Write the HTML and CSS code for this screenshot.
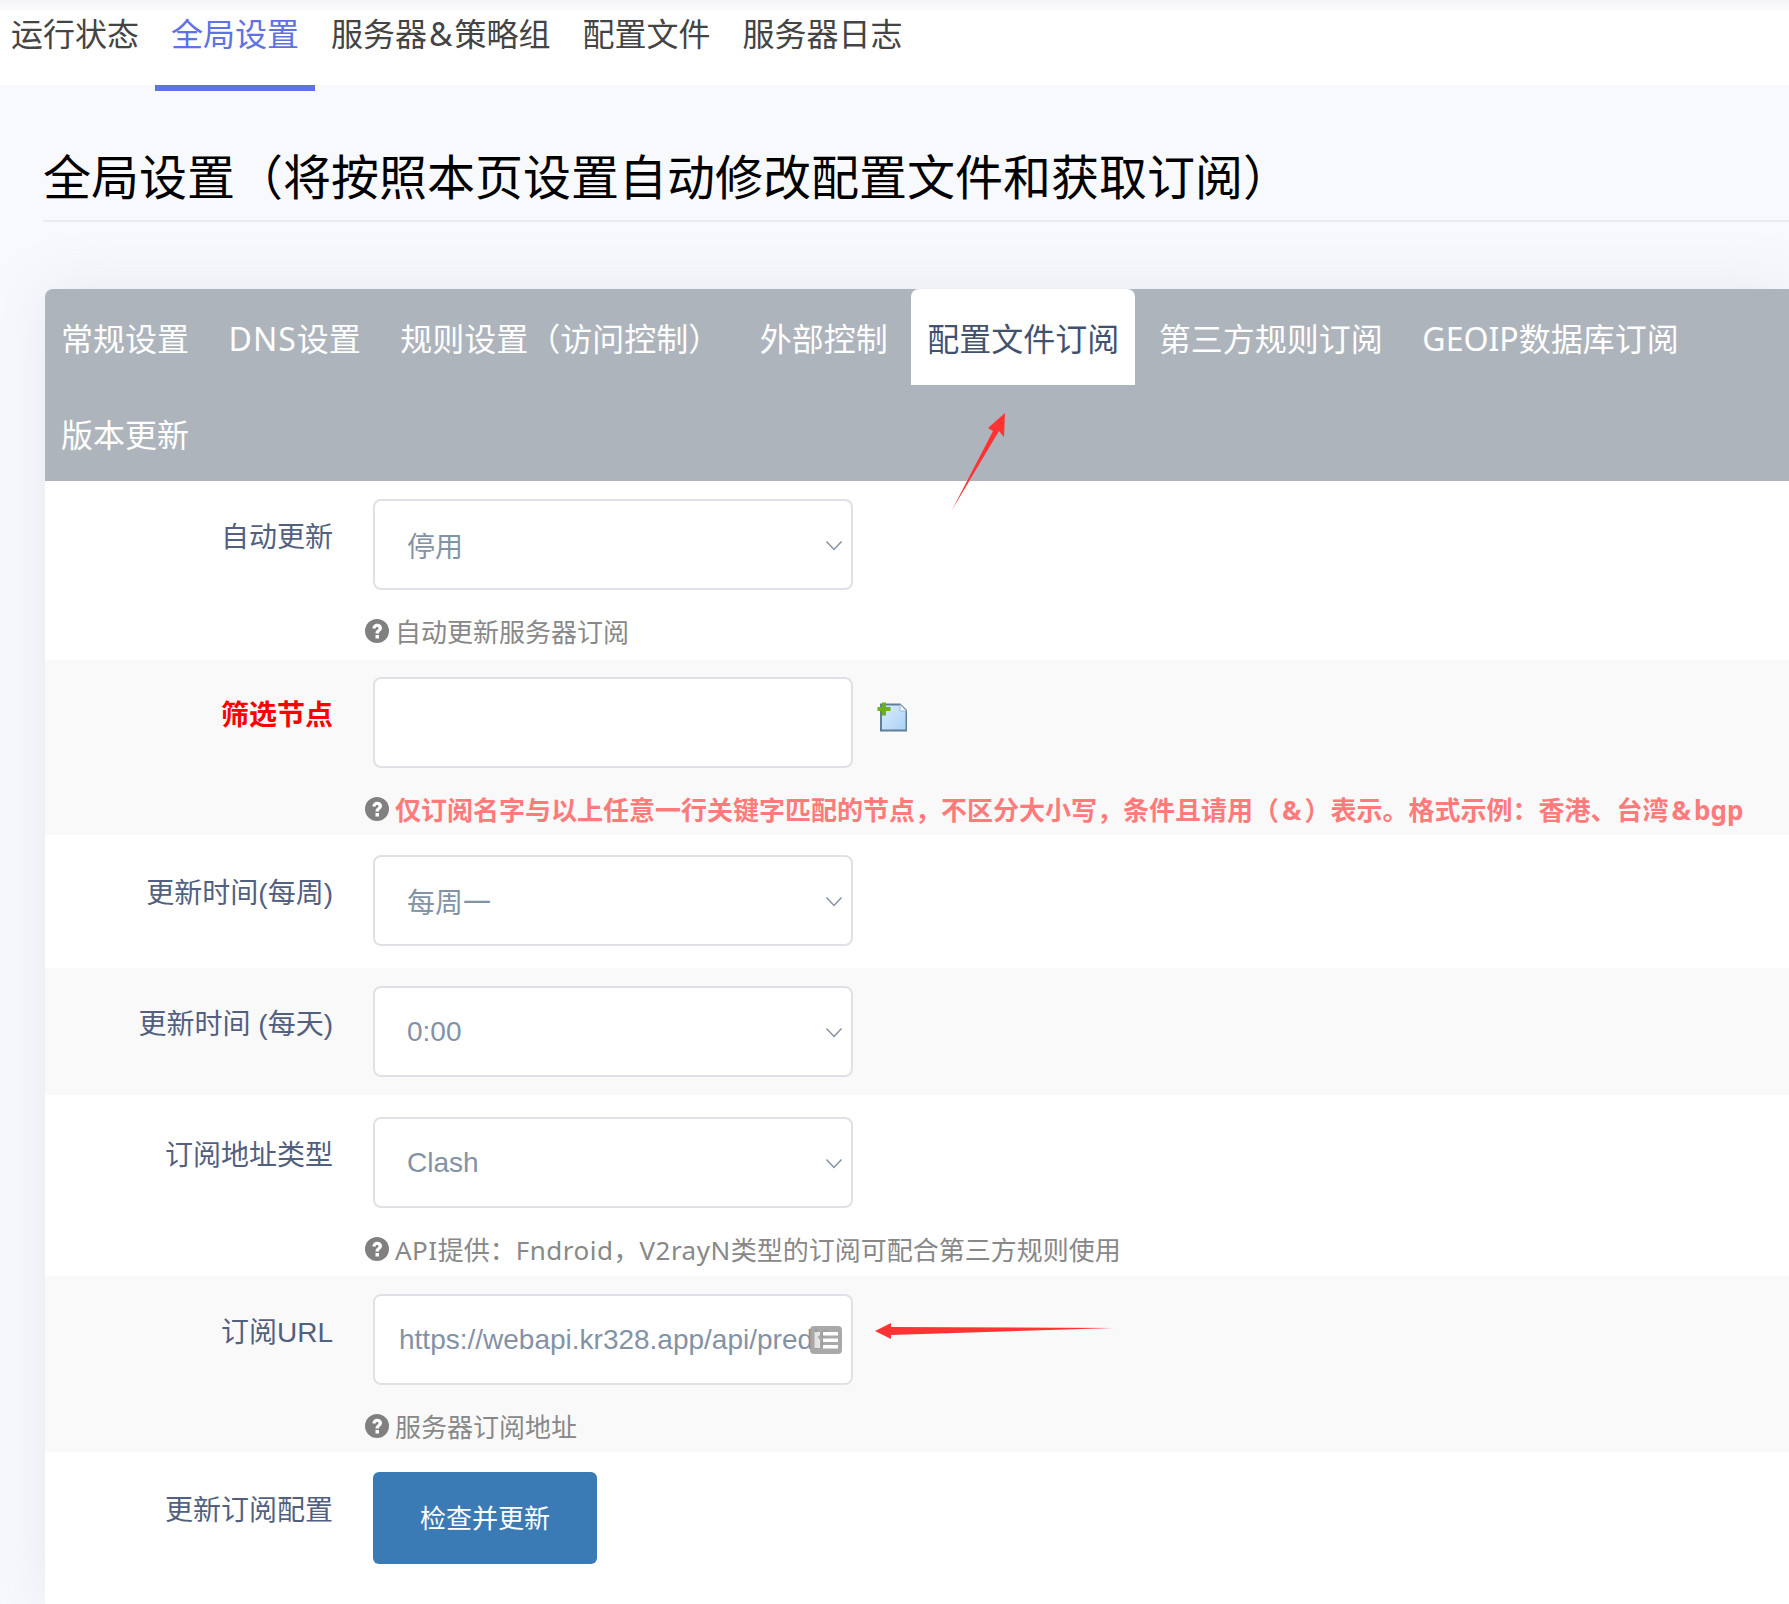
FILE: index.html
```html
<!DOCTYPE html>
<html lang="zh-CN">
<head>
<meta charset="utf-8">
<title>全局设置</title>
<link rel="stylesheet" href="styles.css">
</head>
<body>
<svg class="defs" width="0" height="0" aria-hidden="true">
  <defs>
    <linearGradient id="docfill" x1="0" y1="0" x2="1" y2="1"><stop offset="0" stop-color="#dcedfd"/><stop offset="1" stop-color="#a9d1f6"/></linearGradient>
    <symbol id="q" viewBox="0 0 24 24"><circle cx="12" cy="12" r="12" fill="#808080"/><path d="M7.500 9.500 C7.500 6.500 9.700 4.800 12.300 4.800 C15 4.800 17 6.500 17 9 C17 12 14 12 14 14.500 L10.500 14.500 C10.500 10.800 13.500 10.800 13.500 9.200 C13.500 8.400 12.900 7.900 12.100 7.900 C11.200 7.900 10.700 8.500 10.700 9.500 Z M10.500 16 H14 V19.500 H10.500 Z" fill="#fff"/></symbol>
    <symbol id="chev" viewBox="0 0 18 12"><path d="M1.500 1.500 L9 9.500 L16.500 1.500" fill="none" stroke="#8492a6" stroke-width="1.500"/></symbol>
  </defs>
</svg>
<nav class="topnav">
  <a class="topnav-item">运行状态</a>
  <a class="topnav-item is-active">全局设置</a>
  <a class="topnav-item">服务器<span class="amp">&amp;</span>策略组</a>
  <a class="topnav-item">配置文件</a>
  <a class="topnav-item">服务器日志</a>
</nav>
<main class="page">
  <h1 class="page-title">全局设置（将按照本页设置自动修改配置文件和获取订阅）</h1>
  <section class="card">
    <div class="tabs">
      <a class="tab">常规设置</a>
      <a class="tab"><span class="latin-wide">DNS</span>设置</a>
      <a class="tab">规则设置（访问控制）</a>
      <a class="tab">外部控制</a>
      <a class="tab is-active">配置文件订阅</a>
      <a class="tab">第三方规则订阅</a>
      <a class="tab">GEOIP数据库订阅</a>
      <a class="tab">版本更新</a>
      <svg class="arrow-up" width="60" height="100" viewBox="0 0 60 100"><path d="M1 97 L42 18 L37 15 L54 0 L53 24 L48 18 Z" fill="#ff3333"/></svg>
    </div>
    <div class="form">
      <div class="row">
        <label class="row-label">自动更新</label>
        <div class="row-field">
          <div class="control-line"><div class="control select">停用<svg class="chev" width="18" height="12"><use href="#chev"/></svg></div></div>
          <p class="help"><svg class="help-icon" width="24" height="24"><use href="#q"/></svg>自动更新服务器订阅</p>
        </div>
      </div>
      <div class="row row-alt">
        <label class="row-label label-danger">筛选节点</label>
        <div class="row-field">
          <div class="control-line"><div class="control"></div>
            <svg class="add-icon" width="30" height="30" viewBox="0 0 30 30"><path d="M4 2.500 H23 L29.500 9 V28.500 H4 Z" fill="url(#docfill)" stroke="#5f7f97" stroke-width="2"/><path d="M23 2.500 V9 H29.500" fill="#f2f8fe" stroke="#9fb6c8" stroke-width="1"/><path d="M5 .500 H9 V5 H13.500 V9 H9 V13.500 H5 V9 H.500 V5 H5 Z" fill="#6cb020"/></svg>
          </div>
          <p class="help help-danger"><svg class="help-icon" width="24" height="24"><use href="#q"/></svg><span>仅订阅名字与以上任意一行关键字匹配的节点，不区分大小写，条件且请用（<span class="amp-sm">&amp;</span>）表示。格式示例：香港、台湾<span class="amp-sm">&amp;</span>bgp</span></p>
        </div>
      </div>
      <div class="row">
        <label class="row-label">更新时间(每周)</label>
        <div class="row-field">
          <div class="control-line"><div class="control select">每周一<svg class="chev" width="18" height="12"><use href="#chev"/></svg></div></div>
        </div>
      </div>
      <div class="row row-alt">
        <label class="row-label">更新时间 (每天)</label>
        <div class="row-field">
          <div class="control-line"><div class="control select select-latin">0:00<svg class="chev" width="18" height="12"><use href="#chev"/></svg></div></div>
        </div>
      </div>
      <div class="row">
        <label class="row-label">订阅地址类型</label>
        <div class="row-field">
          <div class="control-line"><div class="control select select-latin">Clash<svg class="chev" width="18" height="12"><use href="#chev"/></svg></div></div>
          <p class="help"><svg class="help-icon" width="24" height="24"><use href="#q"/></svg><span><span class="help-latin">API</span>提供：<span class="help-latin">Fndroid</span>，<span class="help-latin">V2rayN</span>类型的订阅可配合第三方规则使用</span></p>
        </div>
      </div>
      <div class="row row-alt">
        <label class="row-label">订阅URL</label>
        <div class="row-field">
          <div class="control-line"><div class="control control-url"><input class="url-input" type="text" readonly value="https://webapi.kr328.app/api/predl8s/clash"><svg class="url-icon" width="32" height="28" viewBox="0 0 32 28"><rect width="32" height="28" rx="4" fill="#a0a0a0" fill-opacity=".9"/><path d="M13 6 H28 V9.500 H13 Z M13 12.500 H28 V16 H13 Z M13 19 H28 V22.500 H13 Z" fill="#fff"/><path d="M4.500 6 H10 V9 L7.500 11 L10 14 V22 H4.500 Z" fill="#fff" fill-opacity=".7"/></svg></div>
            <svg class="arrow-left" width="240" height="18" viewBox="0 0 240 18"><path d="M0 9 L16 1 L16 5 L239 6 L16 13 L16 17 Z" fill="#ff3333"/></svg>
          </div>
          <p class="help"><svg class="help-icon" width="24" height="24"><use href="#q"/></svg>服务器订阅地址</p>
        </div>
      </div>
      <div class="row">
        <label class="row-label">更新订阅配置</label>
        <div class="row-field"><button class="btn" type="button">检查并更新</button></div>
      </div>
    </div>
  </section>
</main>
</body>
</html>
```
FILE: styles.css
```css
* { box-sizing: border-box; }
html, body { margin: 0; padding: 0; height: 100%; }
body {
  width: 1789px;
  height: 1604px;
  overflow: hidden;
  background: #f8f9fd;
  font-family: "Noto Sans", "Noto Sans CJK SC", sans-serif;
  color: #333;
}
.defs { position: absolute; }
.topnav {
  display: flex;
  height: 85px;
  padding-left: 11px;
  background: linear-gradient(#f4f3f6 0, #fff 12px);
  gap: 32px;
  font-size: 32px;
  line-height: 68px;
  color: #444;
}
.topnav-item { position: relative; white-space: nowrap; }
.amp { padding: 0 2px; }
.amp-sm { padding: 0 3px; }
.latin-wide { letter-spacing: 1px; }
.help-latin { letter-spacing: .5px; }
.topnav-item.is-active { color: #5e72e4; }
.topnav-item.is-active::after {
  content: "";
  position: absolute;
  left: -16px;
  right: -16px;
  top: 85px;
  height: 6px;
  background: #5e72e4;
}
.page { padding: 0 0 0 43px; }
.page-title {
  margin: 0;
  padding-top: 57px;
  height: 137px;
  border-bottom: 2px solid #e9ecef;
  font-size: 48px;
  font-weight: 400;
  line-height: 70px;
  color: #000;
  white-space: nowrap;
}
.card {
  margin-top: 67px;
  margin-left: 2px;
  border-radius: 8px 0 0 0;
  background: #fff;
  box-shadow: 0 0 60px rgba(136, 152, 170, .16);
  height: 1315px;
}
.tabs {
  position: relative;
  display: flex;
  flex-wrap: wrap;
  gap: 0 7.500px;
  height: 192px;
  background: #aeb4bc;
  border-radius: 8px 0 0 0;
  font-size: 32px;
  color: #fff;
}
.tab { height: 96px; line-height: 100px; padding: 0 16px; white-space: nowrap; }
.tab.is-active { background: #fff; color: #42526e; border-radius: 8px 8px 0 0; }
.arrow-up { position: absolute; left: 906px; top: 124px; z-index: 2; }
.form { font-size: 28px; }
.row { display: flex; align-items: flex-start; }
.row-alt { background: #f9f9f9; }
.row:nth-child(1) { height: 179px; padding-top: 18px; }
.row:nth-child(2) { height: 175px; padding-top: 17px; }
.row:nth-child(3) { height: 133px; padding-top: 20px; }
.row:nth-child(4) { height: 127px; padding-top: 18px; }
.row:nth-child(5) { height: 181px; padding-top: 22px; }
.row:nth-child(6) { height: 176px; padding-top: 18px; }
.row:nth-child(7) { height: 150px; padding-top: 20px; }
.row-label {
  flex: none;
  width: 288px;
  padding-top: 19px;
  text-align: right;
  font-family: "Liberation Sans", "Noto Sans CJK SC", sans-serif;
  font-size: 28px;
  line-height: 40px;
  color: #525f7f;
}
.label-danger { color: #f00; font-weight: 700; }
.row-field { flex: 1; min-width: 0; padding-left: 40px; }
.control-line { display: flex; align-items: flex-start; }
.control {
  position: relative;
  flex: none;
  width: 480px;
  height: 91px;
  background: #fff;
  border: 2px solid #dee2e6;
  border-radius: 8px;
}
.select {
  padding-left: 32px;
  line-height: 94px;
  font-family: "Liberation Sans", "Noto Sans CJK SC", sans-serif;
  font-size: 28px;
  color: #8492a6;
}
.select-latin { line-height: 88px; }
.chev { position: absolute; right: 8px; top: 39px; }
.control-url { overflow: hidden; }
.url-input {
  display: block;
  width: 100%;
  height: 87px;
  padding: 0 23px 0 24px;
  border: 0;
  outline: 0;
  background: transparent;
  font-family: "Liberation Sans", sans-serif;
  font-size: 28px;
  color: #8492a6;
}
.url-icon { position: absolute; right: 9px; top: 30px; }
.add-icon { margin: 25px 0 0 24px; }
.arrow-left { margin: 28px 0 0 22px; }
.help {
  display: flex;
  align-items: center;
  gap: 6px;
  margin: 22px 0 0 -8px;
  height: 40px;
  font-size: 26px;
  line-height: 40px;
  color: #888;
  white-space: nowrap;
}
.help-icon { flex: none; margin-top: -2px; }
.help-danger { color: #ff7b7b; font-weight: 700; }
.btn {
  display: block;
  width: 224px;
  height: 92px;
  padding: 0 0 2px;
  border: 0;
  border-radius: 6px;
  background: #3a7bb6;
  color: #fff;
  font-family: inherit;
  font-size: 26px;
}
```
